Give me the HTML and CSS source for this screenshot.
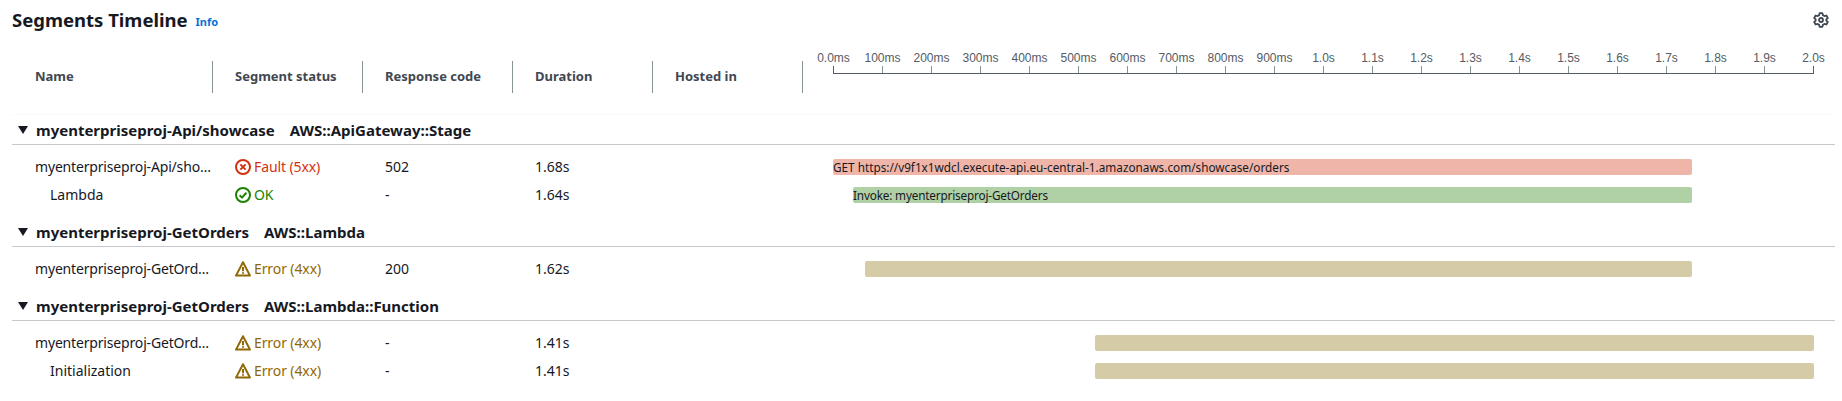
FILE: index.html
```html
<!DOCTYPE html>
<html>

  <head>
    <meta charset="UTF-8">
    <title>Segments Timeline</title>
    <link rel="stylesheet" href="styles.css">
  </head>

  <body>
    <div class="panel">
      <div class="title-bar">
        <h2>Segments Timeline</h2>
        <a class="info" href="#">Info</a>
        <svg class="gear" viewBox="0 0 16 16">
          <path d="M6.6 1.2h2.8l.5 2 1.5.9 2-.6 1.4 2.5-1.5 1.4v1.2l1.5 1.4-1.4 2.5-2-.6-1.5.9-.5 2H6.6l-.5-2-1.5-.9-2 .6-1.4-2.5 1.5-1.4V7.4L1.2 6l1.4-2.5 2 .6 1.5-.9z" />
          <circle cx="8" cy="8" r="2" />
        </svg>
      </div>

      <div class="cols thead">
        <div class="th">Name</div>
        <div class="th">Segment status</div>
        <div class="th">Response code</div>
        <div class="th">Duration</div>
        <div class="th">Hosted in</div>
        <div class="axis">
          <div class="tick"><span>0.0ms</span></div>
          <div class="tick"><span>100ms</span></div>
          <div class="tick"><span>200ms</span></div>
          <div class="tick"><span>300ms</span></div>
          <div class="tick"><span>400ms</span></div>
          <div class="tick"><span>500ms</span></div>
          <div class="tick"><span>600ms</span></div>
          <div class="tick"><span>700ms</span></div>
          <div class="tick"><span>800ms</span></div>
          <div class="tick"><span>900ms</span></div>
          <div class="tick"><span>1.0s</span></div>
          <div class="tick"><span>1.1s</span></div>
          <div class="tick"><span>1.2s</span></div>
          <div class="tick"><span>1.3s</span></div>
          <div class="tick"><span>1.4s</span></div>
          <div class="tick"><span>1.5s</span></div>
          <div class="tick"><span>1.6s</span></div>
          <div class="tick"><span>1.7s</span></div>
          <div class="tick"><span>1.8s</span></div>
          <div class="tick"><span>1.9s</span></div>
          <div class="tick"><span>2.0s</span></div>
        </div>
      </div>

      <div class="group-head">
        <svg class="caret" viewBox="0 0 10 8"><path d="M0 0h10L5 8z" /></svg>
        <span>myenterpriseproj-Api/showcase</span>
        <span>AWS::ApiGateway::Stage</span>
      </div>
      <div class="rows">
        <div class="cols row">
          <div class="name">myenterpriseproj-Api/sho…</div>
          <div class="status fault">
            <svg viewBox="0 0 16 16"><circle cx="8" cy="8" r="7" /><path d="M5.4 5.4l5.2 5.2M10.6 5.4l-5.2 5.2" /></svg>
            Fault (5xx)
          </div>
          <div>502</div>
          <div>1.68s</div>
          <div></div>
          <div class="track">
            <div class="bar bar-red" style="margin-left: 0; width: 87.55%">GET https://v9f1x1wdcl.execute-api.eu-central-1.amazonaws.com/showcase/orders</div>
          </div>
        </div>
        <div class="cols row">
          <div class="name sub">Lambda</div>
          <div class="status ok">
            <svg viewBox="0 0 16 16"><circle cx="8" cy="8" r="7" /><path d="M4.6 8.2l2.4 2.4 4.4-4.8" /></svg>
            OK
          </div>
          <div>-</div>
          <div>1.64s</div>
          <div></div>
          <div class="track">
            <div class="bar bar-green" style="margin-left: 2.04%; width: 85.51%">Invoke: myenterpriseproj-GetOrders</div>
          </div>
        </div>
      </div>

      <div class="group-head">
        <svg class="caret" viewBox="0 0 10 8"><path d="M0 0h10L5 8z" /></svg>
        <span>myenterpriseproj-GetOrders</span>
        <span>AWS::Lambda</span>
      </div>
      <div class="rows">
        <div class="cols row">
          <div class="name">myenterpriseproj-GetOrd…</div>
          <div class="status warn">
            <svg viewBox="0 0 16 16"><path d="M8 1.2L1 14.6h14z" /><path d="M8 6v4.2M8 11.2v1.6" /></svg>
            Error (4xx)
          </div>
          <div>200</div>
          <div>1.62s</div>
          <div></div>
          <div class="track">
            <div class="bar bar-tan" style="margin-left: 3.3%; width: 84.25%"></div>
          </div>
        </div>
      </div>

      <div class="group-head">
        <svg class="caret" viewBox="0 0 10 8"><path d="M0 0h10L5 8z" /></svg>
        <span>myenterpriseproj-GetOrders</span>
        <span>AWS::Lambda::Function</span>
      </div>
      <div class="rows">
        <div class="cols row">
          <div class="name">myenterpriseproj-GetOrd…</div>
          <div class="status warn">
            <svg viewBox="0 0 16 16"><path d="M8 1.2L1 14.6h14z" /><path d="M8 6v4.2M8 11.2v1.6" /></svg>
            Error (4xx)
          </div>
          <div>-</div>
          <div>1.41s</div>
          <div></div>
          <div class="track">
            <div class="bar bar-tan" style="margin-left: 26.7%; width: 73.3%"></div>
          </div>
        </div>
        <div class="cols row">
          <div class="name sub">Initialization</div>
          <div class="status warn">
            <svg viewBox="0 0 16 16"><path d="M8 1.2L1 14.6h14z" /><path d="M8 6v4.2M8 11.2v1.6" /></svg>
            Error (4xx)
          </div>
          <div>-</div>
          <div>1.41s</div>
          <div></div>
          <div class="track">
            <div class="bar bar-tan" style="margin-left: 26.7%; width: 73.3%"></div>
          </div>
        </div>
      </div>
    </div>
  </body>

</html>
```

FILE: styles.css
```css
* {
  margin: 0;
  padding: 0;
  box-sizing: border-box;
}

body {
  background: #fff;
  color: #16191f;
  font-family: "Noto Sans", sans-serif;
  font-size: 14px;
}

.panel {
  padding: 0 7px 0 12px;
}

.title-bar {
  display: flex;
  align-items: center;
  height: 40px;
}

.title-bar h2 {
  font-size: 18.5px;
  font-weight: 700;
  line-height: 22px;
}

.info {
  margin-left: 8px;
  margin-top: 2px;
  color: #0972d3;
  font-size: 11px;
  font-weight: 700;
  text-decoration: none;
}

.gear {
  width: 16px;
  height: 16px;
  margin-left: auto;
  margin-right: 6px;
  fill: none;
  stroke: #414750;
  stroke-width: 1.8;
  stroke-linejoin: round;
}

/* shared columns of header and rows */
.cols {
  display: grid;
  grid-template-columns: 201px 150px 150px 140px 150px 1fr;
}

.thead {
  height: 75px;
  border-bottom: 1px solid #fafafa;
}

.th {
  height: 32px;
  margin-top: 21px;
  padding-left: 22px;
  border-right: 1px solid #879596;
  color: #414750;
  font-size: 13px;
  font-weight: 700;
  line-height: 31px;
}

.th:first-child {
  padding-left: 23px;
}

.axis {
  display: flex;
  justify-content: space-between;
  align-items: flex-end;
  height: 21px;
  margin: 13px 21px 0 30px;
  border-bottom: 1px solid #545b64;
}

.tick {
  display: flex;
  justify-content: center;
  width: 1px;
  height: 7px;
  background: #879596;
}

.tick:first-child,
.tick:last-child {
  background: #545b64;
}

.tick span {
  margin-top: -15px;
  height: 14px;
  color: #545b64;
  font-family: "Liberation Sans", Arial, sans-serif;
  font-size: 12px;
  line-height: 14px;
}

.group-head {
  display: flex;
  align-items: center;
  gap: 15px;
  height: 30px;
  padding-top: 1px;
  border-bottom: 1px solid #c6c6cd;
  font-size: 15px;
  font-weight: 700;
}

.caret {
  width: 10px;
  height: 8px;
  margin-left: 6px;
  margin-right: -7px;
  fill: #16191f;
}

.rows {
  padding: 8px 0;
}

.row {
  height: 28px;
  align-items: center;
  line-height: 28px;
}

.row > div {
  padding-left: 22px;
}

.row > .name {
  padding-left: 23px;
  white-space: nowrap;
  letter-spacing: -0.17px;
}

.row > .sub {
  padding-left: 38px;
  letter-spacing: 0;
}

.status {
  display: flex;
  align-items: center;
  gap: 3px;
  letter-spacing: -0.1px;
}

.status svg {
  width: 16px;
  height: 16px;
  fill: none;
  stroke: currentColor;
  stroke-width: 2;
  stroke-linejoin: round;
}

.fault {
  color: #d13212;
}

.ok {
  color: #1d8102;
}

.warn {
  color: #906806;
}

.row > .track {
  padding: 0 21px 0 30px;
}

.bar {
  height: 16px;
  border-radius: 2px;
  font-size: 11.75px;
  line-height: 16px;
  white-space: nowrap;
}

.bar-red {
  background: #efb5a8;
}

.bar-green {
  background: #b0d0a6;
  letter-spacing: -0.17px;
}

.bar-tan {
  background: #d5cba6;
}
```
